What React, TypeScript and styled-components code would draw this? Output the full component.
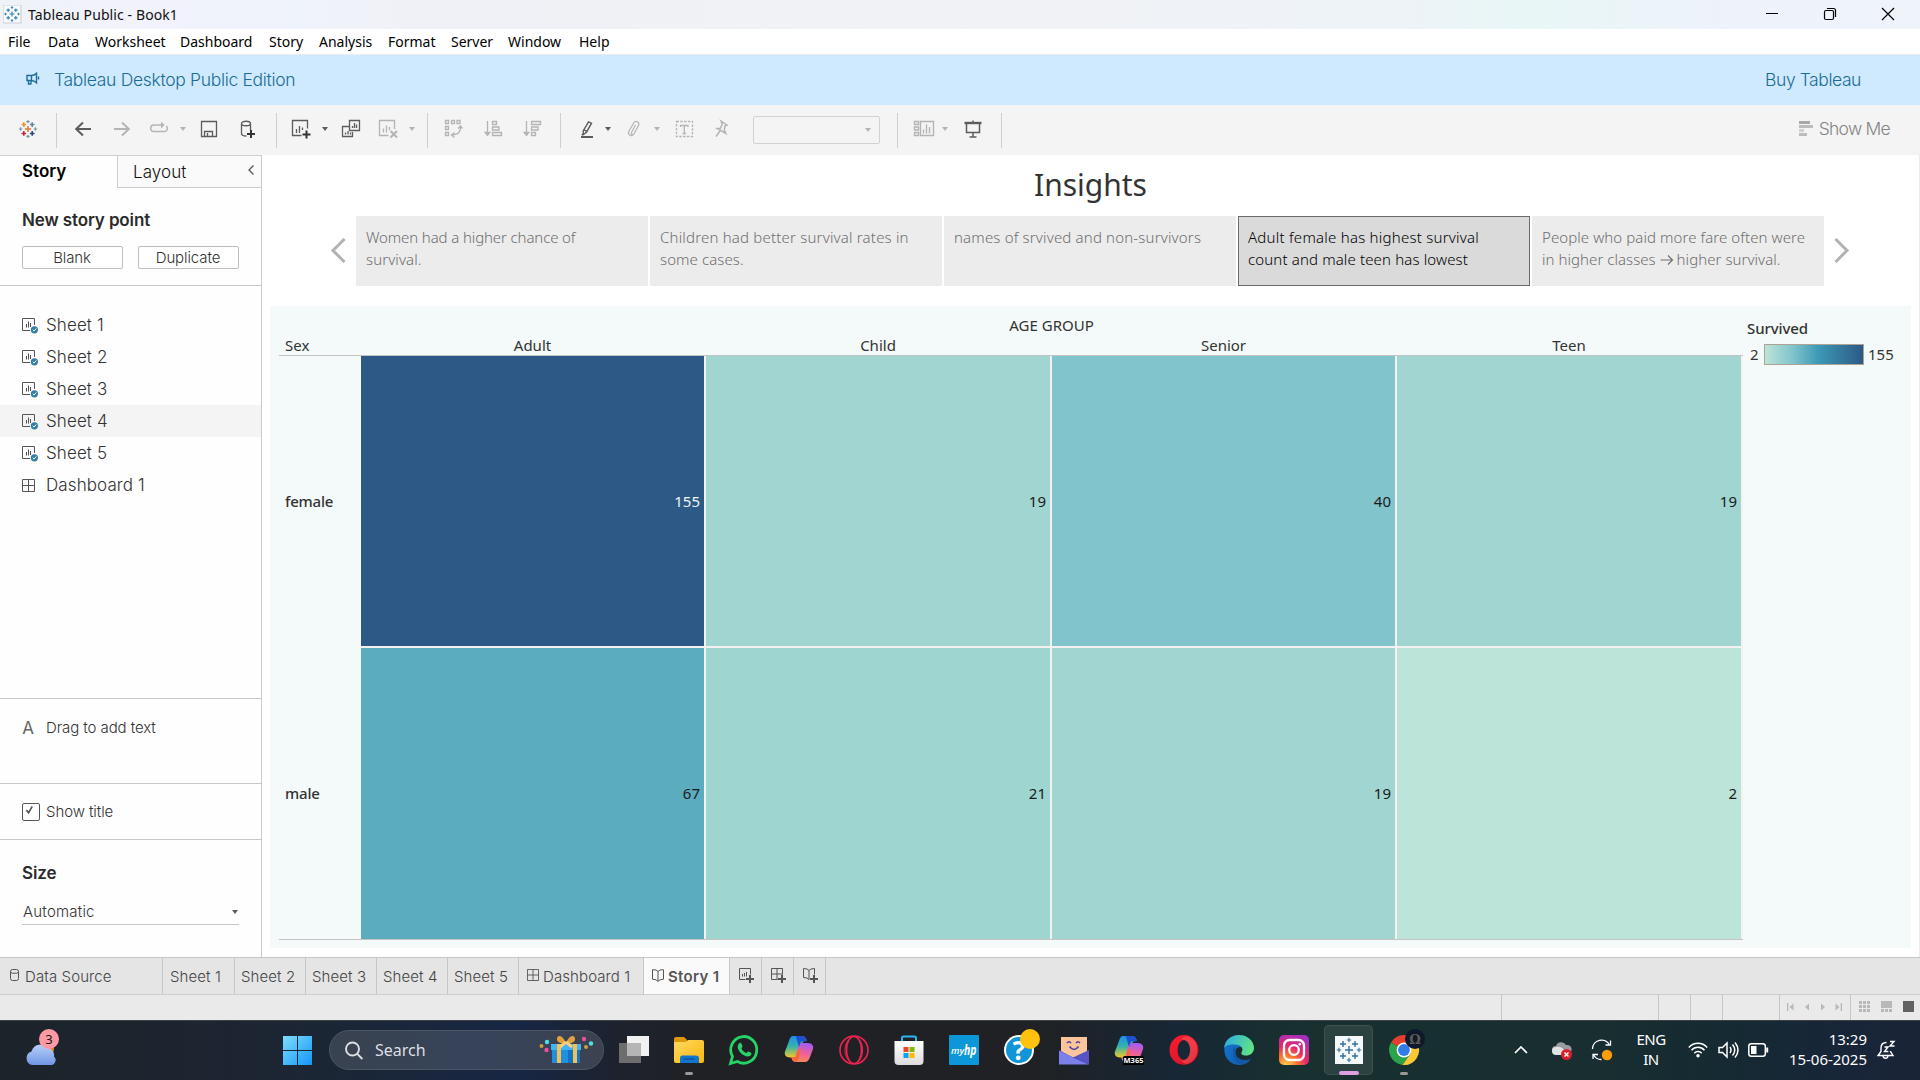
import React from "react";
import styled, { createGlobalStyle, css } from "styled-components";

const ui = `"Inter", "Liberation Sans", sans-serif`;
const book = `"Noto Sans", "Open Sans", sans-serif`;

const Global = createGlobalStyle`
  *, *::before, *::after { box-sizing: border-box; }
  html, body { margin: 0; padding: 0; background: #fff; overflow: hidden; }
  svg { display: block; flex: none; }
`;

const Screen = styled.div`
  width: 1920px;
  height: 1080px;
  display: flex;
  flex-direction: column;
  overflow: hidden;
  font-family: ${ui};
  color: #333;
  white-space: nowrap;
`;

/* ---------- window chrome ---------- */

const TitleBar = styled.header`
  height: 29px;
  display: flex;
  align-items: center;
  padding-left: 3px;
  background: linear-gradient(90deg, #eef3f8 0, #f2f2fb 120px, #eff3fb 300px, #f0f1f6 420px, #f1f2f6 1000px, #edf3f7 1400px, #e8f6f6 1530px, #eef2fb 1740px, #eff3fa 100%);
`;
const AppTitle = styled.span`
  flex: 1;
  padding: 0 0 0 6px;
  font: 400 14px/20px ${book};
  letter-spacing: 0.1px;
  color: #111;
`;
const WindowButtons = styled.div`
  display: flex;
  gap: 38px;
  padding: 0 22px 1px 0;
`;

const MenuBar = styled.nav`
  height: 26px;
  display: flex;
  align-items: center;
  gap: 16px;
  padding: 1px 8px 0;
  background: #fff;
  border-bottom: 1px solid #ececec;
  font: 400 14px/20px ${book};
  color: #000;
`;
const MenuItem = styled.span<{ $w: number }>`
  width: ${(p) => p.$w}px;
`;

const Banner = styled.div`
  height: 50px;
  display: flex;
  align-items: center;
  padding: 0 59px 2px 26px;
  background: #cfe9fe;
  color: #1a6d95;
  font-size: 17.5px;
  font-weight: 300;
`;
const BannerText = styled.span<{ $track: number }>`
  letter-spacing: ${(p) => p.$track}px;
`;
const BannerLabel = styled.div`
  flex: 1;
  display: flex;
  align-items: center;
  gap: 14px;
`;

/* ---------- toolbar ---------- */

const Toolbar = styled.div`
  height: 50px;
  display: flex;
  align-items: center;
  padding-bottom: 2px;
  background: #f4f4f4;
`;
const Tool = styled.span<{ $gap: number; $off?: boolean }>`
  margin-left: ${(p) => p.$gap}px;
  width: 20px;
  height: 20px;
  flex: none;
  color: ${(p) => (p.$off ? "#b4b4b4" : "#5c5c5c")};
`;
const Divider = styled.span<{ $gap: number }>`
  margin: 2px 0 0 ${(p) => p.$gap}px;
  width: 1px;
  height: 35px;
  flex: none;
  background: #cfcfcf;
`;
const Caret = styled.span<{ $gap?: number; $off?: boolean }>`
  margin-left: ${(p) => p.$gap ?? 0}px;
  width: 8px;
  display: flex;
  justify-content: center;
  flex: none;
  &::after {
    content: "";
    border: 3px solid transparent;
    border-top: 4px solid ${(p) => (p.$off ? "#b4b4b4" : "#5c5c5c")};
    border-bottom: 0;
  }
`;
const FitBox = styled.div`
  margin: 2px 0 0 22px;
  width: 127px;
  height: 28px;
  display: flex;
  align-items: center;
  justify-content: flex-end;
  padding-right: 7px;
  border: 1px solid #d2d2d2;
  border-radius: 2px;
`;
const ShowMe = styled.div`
  margin-left: auto;
  display: flex;
  align-items: center;
  gap: 6px;
  padding: 0 30px 1px 0;
  color: #858585;
  font-size: 17.5px;
  font-weight: 300;
  letter-spacing: -0.75px;
`;

/* ---------- side pane ---------- */

const Workspace = styled.div`
  height: 802px;
  display: flex;
`;
const Side = styled.aside`
  width: 262px;
  display: flex;
  flex-direction: column;
  border-right: 1px solid #cbcbcb;
  border-top: 1px solid #d0d0d0;
  background: #fefefe;
`;
const PaneTabs = styled.div`
  display: flex;
  height: 32px;
`;
const StoryTab = styled.div`
  width: 117px;
  padding: 2px 0 0 22px;
  font: 600 17px/26px ${ui};
  letter-spacing: 0;
  color: #000;
`;
const LayoutTab = styled.div`
  flex: 1;
  display: flex;
  justify-content: space-between;
  padding: 3px 7px 0 15px;
  border: solid #cbcbcb;
  border-width: 0 0 1px 1px;
  background: #fafafa;
  font: 300 17px/26px ${ui};
  letter-spacing: 0.1px;
  color: #111;
  svg { margin-top: 6px; }
`;
const Heading = styled.h2`
  margin: 0;
  font: 600 17px/24px ${ui};
  letter-spacing: -0.12px;
  color: #2b2b2b;
`;
const Section = styled.section<{ $h: number; $top: number; $flush?: boolean }>`
  height: ${(p) => p.$h}px;
  padding: ${(p) => p.$top}px ${(p) => (p.$flush ? 0 : 22)}px 0;
  border-bottom: 1px solid #c6c6c6;
  flex: none;
  &:last-child { border-bottom: 0; }
`;
const PointButtons = styled.div`
  display: flex;
  gap: 15px;
  margin-top: 14px;
`;
const PointButton = styled.button`
  width: 101px;
  height: 23px;
  padding: 0 1px 0 0;
  border: 1px solid #bdbdbd;
  border-radius: 2px;
  background: #fff;
  font: 300 15px/20px ${ui};
  letter-spacing: -0.1px;
  color: #333;
`;
const SheetRow = styled.div<{ $on?: boolean }>`
  height: 32px;
  display: flex;
  align-items: center;
  padding-left: 22px;
  font-size: 17px;
  font-weight: 300;
  letter-spacing: 0.1px;
  color: #333;
  background: ${(p) => (p.$on ? "#f4f4f4" : "transparent")};
`;
const RowIcon = styled.span`
  width: 24px;
`;
const Row = styled.div<{ $gap: number }>`
  display: flex;
  align-items: center;
  gap: ${(p) => p.$gap}px;
  font: 300 15px/20px ${ui};
  letter-spacing: -0.08px;
  color: #333;
`;
const Glyph = styled.span`
  width: 12px;
  font: 400 17px/20px ${ui};
  color: #666;
  text-align: center;
`;
const Check = styled.span`
  width: 18px;
  height: 18px;
  border: 1px solid #555;
  border-radius: 2px;
  display: grid;
  place-items: center;
  padding: 0 3px 3px 0;
  background: #fff;
`;
const SizeSelect = styled.div`
  display: flex;
  align-items: center;
  justify-content: space-between;
  width: 217px;
  height: 28px;
  margin-top: 12px;
  padding: 2px 0 0 1px;
  border-bottom: 1px solid #c6c6c6;
  font: 300 15px/20px ${ui};
  letter-spacing: 0.2px;
`;

/* ---------- story canvas ---------- */

const Canvas = styled.main`
  flex: 1;
  display: flex;
  flex-direction: column;
  background: #fff;
  border-right: 1px solid #ececec;
  font-family: ${book};
`;
const StoryTitle = styled.h1`
  margin: 0;
  height: 61px;
  padding-top: 11px;
  text-align: center;
  font: 400 30px/38px ${book};
  color: #333;
`;
const Navigator = styled.div`
  display: flex;
  align-items: center;
  height: 70px;
  padding-left: 68px;
`;
const Points = styled.div`
  display: flex;
  gap: 2px;
  margin: 0 10px;
`;
const Point = styled.div<{ $on?: boolean }>`
  width: 292px;
  height: 70px;
  padding: 9px 0 0 9px;
  border: 1px solid ${(p) => (p.$on ? "#6a6a6a" : "#ececec")};
  background: ${(p) => (p.$on ? "#dadada" : "#ececec")};
  color: ${(p) => (p.$on ? "#000" : "#6e6e6e")};
  font: 300 15px/22px ${book};
`;
const Line = styled.div<{ $track: number }>`
  height: 22px;
  letter-spacing: ${(p) => p.$track}px;
`;
const Arrow = styled.svg`
  display: inline-block;
  margin: 0 -1px 0 0;
  vertical-align: -1px;
`;
const Board = styled.div`
  margin: 20px 8px 0 8px;
  width: 1641px;
  height: 642px;
  display: flex;
  background: #f3faf9;
  font: 400 15px/20px ${book};
  color: #333;
`;
const Viz = styled.div`
  width: 1464px;
  margin-left: 9px;
  padding-top: 9px;
`;
const FieldTitle = styled.div`
  padding-left: 81px;
  text-align: center;
  height: 21px;
`;
const HeaderRow = styled.div`
  display: grid;
  grid-template-columns: 80px 343px 344px 343px 344px;
  column-gap: 2px;
  height: 20px;
  border-bottom: 1px solid #c4c4c4;
`;
const ColHead = styled.span<{ $left?: boolean }>`
  line-height: 19px;
  text-align: ${(p) => (p.$left ? "left" : "center")};
  padding-left: ${(p) => (p.$left ? 6 : 0)}px;
`;
const Body = styled.div`
  display: grid;
  grid-template-columns: 82px 1382px;
  height: 584px;
  border-bottom: 1px solid #c4c4c4;
`;
const RowHeads = styled.div`
  display: grid;
  grid-template-rows: 290px 290px;
  row-gap: 2px;
  align-items: center;
  padding-left: 6px;
  font-weight: 500;
  letter-spacing: -0.2px;
`;
const Cells = styled.div`
  display: grid;
  grid-template-columns: 343px 344px 343px 344px;
  grid-template-rows: 290px 291px;
  gap: 2px;
  background: #f4f1f0;
`;
const Cell = styled.div<{ $fill: string; $light?: boolean }>`
  display: flex;
  align-items: center;
  justify-content: flex-end;
  padding: 0 4px 1px 0;
  background: ${(p) => p.$fill};
  color: ${(p) => (p.$light ? "#f0f4f8" : "#1a1a1a")};
`;
const Legend = styled.div`
  padding: 12px 0 0 4px;
`;
const LegendTitle = styled.div`
  font-weight: 500;
  letter-spacing: -0.1px;
`;
const LegendScale = styled.div`
  display: flex;
  align-items: center;
  gap: 4px;
  padding: 6px 0 0 3px;
`;
const ScaleEnd = styled.span<{ $w: number }>`
  width: ${(p) => p.$w}px;
  margin-top: -2px;
`;
const Ramp = styled.span`
  width: 100px;
  height: 21px;
  border: 1px solid #aea393;
  background: linear-gradient(90deg, #bce4d8, #81c4cc 28%, #3c98b5 55%, #2c5985);
`;

/* ---------- sheet tabs and status bar ---------- */

const SheetTabs = styled.div`
  height: 38px;
  display: flex;
  border-top: 1px solid #c6c6c6;
  border-bottom: 1px solid #cecece;
  background: #e5e5e5;
`;
const SheetTab = styled.div<{ $w: number; $pad?: number; $gap?: number; $on?: boolean }>`
  width: ${(p) => p.$w}px;
  display: flex;
  align-items: center;
  gap: ${(p) => p.$gap ?? 5}px;
  padding-left: ${(p) => p.$pad ?? 6}px;
  border-right: 1px solid #c6c6c6;
  font-size: 15px;
  font-weight: 300;
  letter-spacing: 0.1px;
  color: #444;
  svg { margin-bottom: 2px; }
  ${(p) => p.$on && css`
    background: #fafafa;
    font-weight: 600;
    letter-spacing: 0.3px;
    color: #555;
  `}
`;
const StatusBar = styled.div`
  height: 25px;
  display: flex;
  justify-content: flex-end;
  background: #eaeaea;
`;
const StatusCell = styled.div<{ $w: number; $pad?: number; $gap?: number }>`
  width: ${(p) => p.$w}px;
  display: flex;
  align-items: center;
  gap: ${(p) => p.$gap ?? 0}px;
  padding: 0 0 2px ${(p) => p.$pad ?? 0}px;
  border-left: 1px solid #c6c6c6;
`;

/* ---------- taskbar ---------- */

const Taskbar = styled.footer`
  height: 60px;
  display: flex;
  align-items: center;
  border-top: 1px solid #3c4347;
  padding-bottom: 1px;
  color: #fff;
  background: linear-gradient(90deg, #1c242a 0, #1e2430 200px, #1b2635 330px, #172644 520px, #1d222d 620px, #202124 700px, #202124 1030px, #172735 1180px, #18302f 1290px, #182e30 1600px, #152a32 1720px, #182539 1850px, #1a2436 100%);
`;
const Weather = styled.div`
  position: relative;
  margin-left: 24px;
  width: 36px;
  height: 40px;
`;
const Badge = styled.span`
  position: absolute;
  left: 15px;
  top: -1px;
  width: 20px;
  height: 20px;
  border-radius: 50%;
  background: #ff99a4;
  color: #111;
  font: 400 13px/20px ${book};
  text-align: center;
`;
const Start = styled.div`
  margin-left: 223px;
`;
const SearchBox = styled.div`
  display: flex;
  align-items: center;
  margin-left: 17px;
  width: 275px;
  height: 40px;
  padding: 0 7px 0 15px;
  border-radius: 20px;
  border: 1px solid #4d5664;
  background: linear-gradient(90deg, #39424f, #36435a 55%, #3c4250);
  font: 400 16px/22px ${book};
  color: #dedfe2;
  span { flex: 1; padding-left: 12px; }
`;
const Apps = styled.div`
  display: flex;
  margin-left: 2px;
`;
const AppSlot = styled.div<{ $mark?: "dot" | "bar"; $active?: boolean }>`
  position: relative;
  width: 55px;
  height: 58px;
  display: grid;
  place-items: center;
  ${(p) => p.$active && css`
    &::before {
      content: "";
      position: absolute;
      inset: 4px 3px 4px 3px;
      border-radius: 5px;
      background: rgba(255, 255, 255, 0.09);
      border: 1px solid rgba(255, 255, 255, 0.08);
    }
  `}
  ${(p) => p.$mark && css`
    &::after {
      content: "";
      position: absolute;
      bottom: 4px;
      left: 50%;
      transform: translateX(-50%);
      width: ${p.$mark === "bar" ? 20 : 8}px;
      height: ${p.$mark === "bar" ? 4 : 3}px;
      border-radius: 2px;
      background: ${p.$mark === "bar" ? "#dc9fe0" : "#999"};
    }
  `}
  svg { position: relative; }
`;
const Tray = styled.div`
  margin-left: auto;
  display: flex;
  align-items: center;
  padding-right: 24px;
`;
const TrayItem = styled.span<{ $gap: number }>`
  margin-left: ${(p) => p.$gap}px;
`;
const TwoLines = styled.div<{ $gap: number; $right?: boolean; $w: number; $track: number }>`
  margin-left: ${(p) => p.$gap}px;
  padding-bottom: 2px;
  width: ${(p) => p.$w}px;
  text-align: ${(p) => (p.$right ? "right" : "center")};
  font: 400 15px/20px ${book};
  letter-spacing: ${(p) => p.$track}px;
`;

/* ---------- drawings ---------- */

const plus = (x: number, y: number, r: number) => `M${x - r} ${y}h${2 * r}M${x} ${y - r}v${2 * r}`;

function TableauMark({ size, colors }: { size: number; colors: string[] }) {
  const [c, ul, ur, dl, dr, small] = colors;
  return (
    <svg width={size} height={size} viewBox="0 0 20 20" fill="none" strokeWidth="1.5">
      <path d={plus(10, 10, 3)} stroke={c} />
      <path d={plus(5.8, 5.6, 2.3)} stroke={ul} />
      <path d={plus(14.2, 5.6, 2.3)} stroke={ur} />
      <path d={plus(5.8, 14.4, 2.3)} stroke={dl} />
      <path d={plus(14.2, 14.4, 2.3)} stroke={dr} />
      <path d={plus(10, 2.6, 1.7) + plus(10, 17.4, 1.7) + plus(2.6, 10, 1.7) + plus(17.4, 10, 1.7)} stroke={small} strokeWidth="1.1" />
    </svg>
  );
}

const toolDrawings: Record<string, React.ReactNode> = {
  back: <path d="M18 10H3.5M10 3.5 3.2 10l6.8 6.5" strokeWidth="2" />,
  forward: <path d="M2 10h14.5M10 3.5l6.8 6.5-6.800 6.5" strokeWidth="2" />,
  redo: (
    <>
      <path d="M13 6H5a3.300 3.300 0 0 0 0 6.600h10.500A3.200 3.200 0 0 0 17.300 7" strokeWidth="1.5" />
      <path d="M12 2.500 15.500 6 12 9.500z" fill="currentColor" stroke="none" />
    </>
  ),
  save: <path d="M2.500 2.500h15v15h-15zM5.500 17.500v-5h8v5M8.500 17v-3" />,
  source: (
    <>
      <path d="M3.500 4.500v10c0 1.500 2 2.500 5 2.500M12.500 4.500v7M3.500 4.500c0-3 9-3 9 0s-9 3-9 0z" />
      <path d="M13 11v8M9 15h8" strokeWidth="2" stroke="#333" />
    </>
  ),
  newSheet: (
    <>
      <path d="M17.500 9.500v-8h-15v15h9M6.500 14v-4M9.500 14V7M12.500 11V8.500" />
      <path d="M16.500 11.500v8M12.500 15.500h8" strokeWidth="2" stroke="#333" />
    </>
  ),
  duplicate: <path d="M8.500 1.500h10v10h-10zM8 7.500H1.500v10h10V13M4.500 15.500v-2M7 15.500v-3.500M9.500 15.500v-2M11.500 9V7M13.500 9V4M15.500 9V5.500" />,
  clear: (
    <>
      <path d="M16.500 10V1.500h-15v15h9M5.500 13.500V9.500M8.500 13.500v-7M11.500 11V8" />
      <path d="M12.500 12l6.500 6.500M19 12l-6.500 6.500" strokeWidth="2" />
    </>
  ),
  swap: <path d="M2.500 1.500h3v3h-3zM8.500 1.500h3v3h-3zM14 1.500h3v3h-3zM2.500 7.500h3v3h-3zM2.500 13.500h3v3h-3zM17.500 7.500c0 6-2 8-9 8.500M11.500 13.500 8.500 16l3 2.500M15 9.500 17.500 7l2 2.500" />,
  asc: <path d="M4.500 2v14M2.200 13.500l2.300 3 2.300-3zM9.500 2.500h4v3h-4zM9.500 8h6.500v3H9.500zM9.500 13.500h9v3h-9z" />,
  desc: <path d="M4.500 2v14M2.200 13.500l2.300 3 2.300-3zM9.500 2.500h9v3h-9zM9.500 8h6.500v3H9.500zM9.500 13.500h4v3h-4z" />,
  pen: (
    <>
      <path d="m11.500 2.800 3 1.400-5 9-3 2.300-.3-3.700zM7 10.800l2.700 1.500M4.800 16.200l1.600-1.600" strokeWidth="1.4" />
      <path d="M4 18h12" strokeWidth="2" />
    </>
  ),
  clip: <path d="m12.500 6-4 7.500c-.8 1.800 1.500 2.800 2.500 1.200l4.500-8.200c1.500-3.500-3-5.500-4.800-2.500L6 12c-2 4 3 6 5 3" strokeWidth="1.2" />,
  text: (
    <>
      <path d="M2.500 2.500h16v15h-16z" strokeDasharray="2.4 1.4" />
      <path d="M6.500 8V6.500H14V8M10.300 6.500v8M8.500 14.500H12" />
    </>
  ),
  pin: <path d="M10 2 16 6l-2 .8-.7 4.200 1.500 3.500-8.500-5 3-.2 2-4zM9 12l-4 5.500" strokeWidth="1.5" />,
  cards: <path d="M.5 2.500h4v3h-4zM.5 8h4v3h-4zM.5 13.500h4v3h-4zM6.500 2.500h13v14h-13zM9.500 14.500v-4M12.500 14.500V5.500M15.500 14.500V8" strokeWidth="1.4" />,
  present: (
    <>
      <path d="M2.500 4h17" strokeWidth="2.4" />
      <path d="M4.500 5v8.500h13V5M11 1.500V3M11 13.500v5M7.500 18h7" strokeWidth="1.5" />
    </>
  ),
};

function ToolIcon({ name, gap, off }: { name: string; gap: number; off?: boolean }) {
  return (
    <Tool $gap={gap} $off={off}>
      <svg width="20" height="20" viewBox="0 0 20 20" fill="none" stroke="currentColor" strokeWidth="1.3" overflow="visible">
        {toolDrawings[name]}
      </svg>
    </Tool>
  );
}

const SheetIcon = () => (
  <svg width="17" height="17" viewBox="0 0 17 17" fill="none" stroke="#555">
    <path d="M12.500 8V1.500H.5v12H8M4.500 10.500V7M6.500 10.500v-6M8.500 10V6" />
    <circle cx="12.400" cy="12.800" r="3.600" fill="#2f7fa6" stroke="none" />
    <path d="m10.700 12.800 1.300 1.300 2.200-2.600" stroke="#fff" />
  </svg>
);
const GridIcon = ({ size }: { size: number }) => (
  <svg width={size} height={size} viewBox="0 0 13 13" fill="none" stroke="#555">
    <path d="M.5.5h12v12H.5zM6.500.5v12M.5 6.500h12" />
  </svg>
);
const BookIcon = () => (
  <svg width="12" height="13" viewBox="0 0 12 13" fill="none" stroke="#555">
    <path d="M6 2.500 4 1 .5.700v9.500l3.500.6 2 1.700 2-1.700 3.500-.6V.700L8 1zM6 2.500v9.500" />
  </svg>
);
const NewTabIcon = ({ kind }: { kind: "sheet" | "dash" | "story" }) => (
  <svg width="17" height="17" viewBox="0 0 17 17" fill="none" stroke="#555">
    {kind === "sheet" && <path d="M12.500 7.500V1.500H1.500v11h6M4.500 9.500V7M6.500 9.500V6M8.500 9.500V5" />}
    {kind === "dash" && <path d="M12.500 7.500V1.500H1.500v11h6M7 1.500v11M1.500 7h11" />}
    {kind === "story" && <path d="M12.500 7.500V1.500L9 2 7 3.500 5 2 1.500 1.500v9L5 11l2 1.700M7 3.500v9" />}
    <path d="M12 8v8M8 12h8" strokeWidth="2" />
  </svg>
);

const CopilotShape = () => (
  <>
    <path d="M9 1h9c3 0 4 2 5 5l-4 .5-3 12-4 4H6c-4 0-6-3-5-6L5 6c.8-3 2-5 4-5z" fill="url(#cpA)" />
    <path d="M21 27h-9c-3 0-4-2-5-5h4l4-13 3-1h6c4 0 6 3 5 6l-3 8c-.8 3-3 5-5 5z" fill="url(#cpB)" />
    <path d="M12 1h6c3 0 4 2 5 5h-4c-2 0-2.500 1-3 3l-1 3-2-7c-.7-2-1.200-3-1-4z" fill="#2050d0" />
    <path d="M13 18l2-4h2l-2 9c-.7 2.500-1.500 4-3.500 4L7 22h4c1.500 0 1.500-2 2-4z" fill="#f4683c" />
  </>
);

const Gradients = () => (
  <svg width="0" height="0">
    <defs>
      <linearGradient id="cpA" x1="0" y1="0" x2="0" y2="1"><stop offset="0" stopColor="#1c8ff0" /><stop offset=".5" stopColor="#37b3a6" /><stop offset="1" stopColor="#f3c822" /></linearGradient>
      <linearGradient id="cpB" x1="0.5" y1="0" x2=".3" y2="1"><stop offset="0" stopColor="#a45cf0" /><stop offset=".5" stopColor="#ef5f9c" /><stop offset="1" stopColor="#fa8a55" /></linearGradient>
      <linearGradient id="win" x1="0" y1="0" x2="1" y2="1"><stop offset="0" stopColor="#7fdcff" /><stop offset="1" stopColor="#1397f5" /></linearGradient>
      <linearGradient id="cloud" x1="0" y1="0" x2="0" y2="1"><stop offset="0" stopColor="#b9d0f7" /><stop offset="1" stopColor="#6f96e6" /></linearGradient>
      <linearGradient id="fold" x1="0" y1="0" x2="1" y2="1"><stop offset="0" stopColor="#ffd964" /><stop offset="1" stopColor="#fbb70c" /></linearGradient>
      <linearGradient id="opera" x1="0" y1="0" x2="1" y2="1"><stop offset="0" stopColor="#ff1b2d" /><stop offset=".6" stopColor="#e0182c" /><stop offset="1" stopColor="#a70014" /></linearGradient>
      <linearGradient id="edgeTop" x1="0" y1="0" x2="1" y2=".3"><stop offset="0" stopColor="#2aa9e8" /><stop offset="1" stopColor="#5fe08a" /></linearGradient>
      <linearGradient id="edgeLow" x1="0" y1="0" x2="1" y2="1"><stop offset="0" stopColor="#1478d4" /><stop offset="1" stopColor="#0f5aa8" /></linearGradient>
      <radialGradient id="insta" cx=".25" cy="1.05" r="1.15"><stop offset="0" stopColor="#ffd95a" /><stop offset=".3" stopColor="#fd7c2d" /><stop offset=".6" stopColor="#e4276b" /><stop offset="1" stopColor="#a32fc4" /></radialGradient>
      <linearGradient id="store" x1="0" y1="0" x2="0" y2="1"><stop offset="0" stopColor="#fff" /><stop offset="1" stopColor="#dcdcdc" /></linearGradient>
    </defs>
  </svg>
);

const apps: { id: string; mark?: "dot" | "bar"; active?: boolean; art: React.ReactNode }[] = [
  { id: "taskview", art: <><path d="M0 8h22v20H0z" fill="#6d6d6d" /><path d="M8 1h22v20H8z" fill="#f1f1f1" /><path d="M8 8h14v13H8z" fill="#b5b5b5" /></> },
  {
    id: "files", mark: "dot",
    art: <><path d="M0 4q0-2 2-2h8l3 3v4H0z" fill="#dd9a06" /><path d="M0 7h12l2-2h14q2 0 2 2v19q0 2-2 2H2q-2 0-2-2z" fill="url(#fold)" /><path d="M6 28v-5q0-2.500 2.500-2.500h13Q25 20.500 25 23v5z" fill="#0f76cc" /><path d="M9.500 24h11" stroke="#0b4f93" strokeWidth="1.2" /></>,
  },
  { id: "whatsapp", art: <><path d="M1.500 28.500 3.500 21.500A13 13.300 0 1 1 8.500 26.500z" fill="none" stroke="#25d366" strokeWidth="2.8" /><path d="M10 8.500c1-1 2-.8 2.500.3l1 2.300c.3 1-1 1.500-1 2.300 1 2.200 2.500 3.600 4.800 4.600 1-.2 1.300-1.800 2.200-1.400l2.400 1.200c1.200.6.3 2.500-1 3.300-3 1.500-7-.8-9.400-3.300C9.300 15.300 7.400 11.500 10 8.500z" fill="#25d366" /></> },
  { id: "copilot", art: <CopilotShape /> },
  { id: "operagx", art: <g fill="none" stroke="#ee2350" strokeWidth="1.6"><ellipse cx="15" cy="15" rx="14" ry="14" /><ellipse cx="15" cy="15" rx="7.500" ry="13.500" /><path d="M18 2.500c7.500 4 7.500 21 0 25M12 3c-8 4-8 20 0 24" strokeWidth="1" /></g> },
  { id: "store", art: <><path d="M8 8V3q0-1.500 1.500-1.500h11Q22 1.500 22 3v5" fill="none" stroke="#2cb5ef" strokeWidth="2" /><path d="M.5 6h29v20q0 4-4 4h-21q-4 0-4-4z" fill="url(#store)" /><path d="M9.500 12h5v5h-5z" fill="#e8472a" /><path d="M15.500 12h5v5h-5z" fill="#7fba00" /><path d="M9.500 18h5v5h-5z" fill="#05a4ef" /><path d="M15.500 18h5v5h-5z" fill="#ffb901" /></> },
  { id: "myhp", art: <><rect width="30" height="30" rx="1" fill="#0c97d8" /><text x="2" y="18.500" fill="#fff" fontFamily="Open Sans, sans-serif" fontSize="9.500" fontWeight="600" fontStyle="italic">my</text><text x="15" y="19.500" fill="#fff" fontFamily="Open Sans, sans-serif" fontSize="14" fontWeight="700" fontStyle="italic" textLength="12.500" lengthAdjust="spacingAndGlyphs">hp</text></> },
  { id: "help", art: <><circle cx="15" cy="15" r="15" fill="#fff" /><circle cx="15" cy="15" r="13" fill="#1195d6" /><text x="15" y="24.500" textAnchor="middle" fill="#fff" fontFamily="Open Sans, sans-serif" fontSize="26" fontWeight="700">?</text><circle cx="26" cy="4" r="10" fill="#ffc20e" /></> },
  { id: "mail", art: <><path d="M2 2h26v20H2z" fill="#fbc49a" /><path d="M0 15l15 8-13 6H0z" fill="#5452c8" /><path d="M0 16l30 13.500H0z" fill="#7c80ea" /><path d="M30 15v14.500L14 22.500z" fill="#5553c6" /><path d="M8 8q2-2.500 4 0M17 8q2-2.500 4 0M10.500 11.500q4.500 6 9 0" fill="none" stroke="#4143a8" strokeWidth="1.5" /></> },
  { id: "m365", art: <><CopilotShape /><rect x="9" y="21" width="21" height="9" rx="1.5" fill="#000" /><text x="19.500" y="28.300" textAnchor="middle" fill="#fff" fontFamily="Open Sans, sans-serif" fontSize="7.500" fontWeight="700">M365</text></> },
  { id: "opera", art: <><path fillRule="evenodd" d="M15 0a14.500 15 0 1 1 0 30 14.500 15 0 1 1 0-30zm0 5a6.500 10 0 1 0 0 20 6.500 10 0 1 0 0-20z" fill="url(#opera)" /><path d="M18 1c14 4 14 24 0 28-3-.5-5-2-6-3.500 12 1 12-22 0-21C13.500 2.500 16 1.300 18 1z" fill="#ff5a5f" opacity=".55" /></> },
  { id: "edge", art: <><path d="M15 0a15 15 0 1 0 11 25.500C18 28 10.500 23 11.500 16c.5-3 3-4.500 5.500-4L22 8z" fill="url(#edgeLow)" /><path d="M0 13C1 5 7 0 15 0c9 0 15 6.500 15 13 0 5-4 7.500-8 7.500-3.500 0-5.500-1.500-4.500-3 3-4.500-1.500-8-6.500-8C6 9 2 10 0 13z" fill="url(#edgeTop)" /><path d="M11 11c-4 5-2 14 5 18.500 5 .5 9-2.500 11-5.500-8 2.500-16 0-15.500-8z" fill="#1457a6" /></> },
  { id: "insta", art: <><rect width="30" height="30" rx="5" fill="url(#insta)" /><rect x="5" y="5" width="20" height="20" rx="5.500" fill="none" stroke="#fff" strokeWidth="2.3" /><circle cx="15" cy="15" r="4.800" fill="none" stroke="#fff" strokeWidth="2.3" /><circle cx="20.800" cy="9.300" r="1.3" fill="#fff" /></> },
  {
    id: "tableau", mark: "bar", active: true,
    art: <><path d="M1 1h28v28H1z" fill="#f5f8fa" /><g fill="none" stroke="#35709c" strokeWidth="1.4"><path d={plus(15, 15, 4) + plus(9, 9, 3) + plus(21, 9, 3) + plus(9, 21, 3) + plus(21, 21, 3)} /><path d={plus(15, 5, 2.2) + plus(15, 25, 2.2) + plus(5, 15, 2.2) + plus(25, 15, 2.2)} strokeWidth="1.1" /></g></>,
  },
  {
    id: "chrome", mark: "dot",
    art: <><path d="M15 15 2 7.500A15 15 0 0 1 28 7.500z" fill="#e43e2f" /><path d="M15 15 2 7.500a15 15 0 0 0 11.500 22.400L21.500 18.700z" fill="#2da24c" /><path d="M15 7.500h13A15 15 0 0 1 13.500 30l8-11.300z" fill="#fcc934" /><circle cx="15" cy="15" r="7.400" fill="#fff" /><circle cx="15" cy="15" r="5.900" fill="#2f7bea" /><circle cx="26" cy="4" r="10" fill="#10182c" /><text x="26" y="8.500" textAnchor="middle" fill="#5d5a52" fontFamily="DejaVu Serif, serif" fontSize="13" fontWeight="700">Ω</text></>,
  },
];

const Gift = () => (
  <svg width="58" height="32" viewBox="0 0 58 32">
    <path d="M14 12h28v17H14z" fill="#1f8fe0" /><path d="M30 12h12v17H30z" fill="#1272c4" /><path d="M13 10h30v6H13z" fill="#3fb3f5" />
    <path d="M19 10h4v19h-4zM35 10h4v19h-4z" fill="#f3bf57" />
    <path d="M28 9C24 0 19 1 19 5c0 3 3 5 9 4zM28 9c4-9 9-8 9-4 0 3-3 5-9 4z" fill="#e0a03c" /><path d="M28 8l-6 5M28 8l6 5" stroke="#f7ce7a" strokeWidth="3" />
    <circle cx="3.500" cy="12" r="2" fill="#c9a13c" /><circle cx="9" cy="8" r="2.200" fill="#4fdfe6" /><circle cx="8.500" cy="16" r="2.200" fill="#ee4f9e" />
    <circle cx="46" cy="5" r="2.200" fill="#ee4f9e" /><circle cx="53" cy="9.500" r="2.200" fill="#4fdfe6" /><circle cx="48" cy="13" r="2" fill="#c9a13c" />
  </svg>
);

const RightArrow = () => (
  <Arrow width="14" height="12" viewBox="0 0 14 12" fill="none" stroke="currentColor" strokeWidth="1.1">
    <path d="M.5 6h12M8 1.500 12.500 6 8 10.500" />
  </Arrow>
);

/* ---------- data ---------- */

const menu: [string, number][] = [["File", 24], ["Data", 31], ["Worksheet", 69], ["Dashboard", 73], ["Story", 34], ["Analysis", 53], ["Format", 47], ["Server", 41], ["Window", 55], ["Help", 32]];

const points: { lines: [React.ReactNode, number][]; on?: boolean }[] = [
  { lines: [["Women had a higher chance of", -0.12], ["survival.", 0.1]] },
  { lines: [["Children had better survival rates in", 0.19], ["some cases.", 0.1]] },
  { lines: [["names of srvived and non-survivors", 0.17]] },
  { lines: [["Adult female has highest survival", 0.24], ["count and male teen has lowest", 0.14]], on: true },
  { lines: [["People who paid more fare often were", 0.08], [<>in higher classes <RightArrow /> higher survival.</>, 0.05]] },
];

const cells: [number, string, boolean?][] = [
  [155, "#2c5985", true], [19, "#a1d5d1"], [40, "#81c4cc"], [19, "#a1d5d1"],
  [67, "#5aacbe"], [21, "#9ed5d1"], [19, "#a1d5d1"], [2, "#bce4d8"],
];

export default function App() {
  return (
    <Screen>
      <Global />
      <Gradients />
      <TitleBar>
        <svg width="19" height="19" viewBox="0 0 19 19" fill="none" stroke="#3b86b5" strokeWidth="1.2">
          <path d="M0 0h18v18H0z" fill="#f7f9fb" stroke="#ccd0d4" />
          <path d={plus(9, 9, 2.5) + plus(5.2, 5.2, 1.8) + plus(12.8, 5.2, 1.8) + plus(5.2, 12.8, 1.8) + plus(12.8, 12.8, 1.8) + plus(9, 2.5, 1.2) + plus(9, 15.5, 1.2) + plus(2.5, 9, 1.2) + plus(15.5, 9, 1.2)} />
        </svg>
        <AppTitle>Tableau Public - Book1</AppTitle>
        <WindowButtons>
          <svg width="20" height="16" viewBox="0 0 20 16" stroke="#000"><path d="M4 7.500h12" /></svg>
          <svg width="20" height="16" viewBox="0 0 20 16" fill="none" stroke="#000" strokeWidth="1.2"><rect x="4.500" y="4.500" width="9" height="9" rx="1.5" /><path d="M7 2.500h6.500q2 0 2 2V11" /></svg>
          <svg width="20" height="16" viewBox="0 0 20 16" stroke="#000" strokeWidth="1.2"><path d="m4 2 12 12M16 2 4 14" /></svg>
        </WindowButtons>
      </TitleBar>

      <MenuBar>
        {menu.map(([label, w]) => <MenuItem key={label} $w={w}>{label}</MenuItem>)}
      </MenuBar>

      <Banner>
        <BannerLabel>
          <svg width="14" height="14" viewBox="0 0 14 14" fill="none" stroke="#1a6d95" strokeWidth="1.4">
            <path d="M1 3.500h4.500c2 0 3.500-.8 5-2.300v9.600c-1.500-1.500-3-2.300-5-2.300H1zM5.500 3.500v5M2.500 8.500V12h2.300l.5-3.500M12.500 4.500v3" />
          </svg>
          <BannerText $track={-0.32}>Tableau Desktop Public Edition</BannerText>
        </BannerLabel>
        <BannerText $track={-0.43}>Buy Tableau</BannerText>
      </Banner>

      <Toolbar>
        <Tool $gap={18}><TableauMark size={20} colors={["#e8762c", "#eb912c", "#59879b", "#c72037", "#1f457e", "#7199a6"]} /></Tool>
        <Divider $gap={18} />
        <ToolIcon name="back" gap={16} />
        <ToolIcon name="forward" gap={19} off />
        <ToolIcon name="redo" gap={17} off />
        <Caret $gap={10} $off />
        <ToolIcon name="save" gap={12} />
        <ToolIcon name="source" gap={19} />
        <Divider $gap={18} />
        <ToolIcon name="newSheet" gap={13} />
        <Caret $gap={11} />
        <ToolIcon name="duplicate" gap={12} />
        <ToolIcon name="clear" gap={17} off />
        <Caret $gap={10} $off />
        <Divider $gap={11} />
        <ToolIcon name="swap" gap={15} off />
        <ToolIcon name="asc" gap={20} off />
        <ToolIcon name="desc" gap={19} off />
        <Divider $gap={18} />
        <ToolIcon name="pen" gap={16} />
        <Caret $gap={7} />
        <ToolIcon name="clip" gap={11} off />
        <Caret $gap={10} $off />
        <ToolIcon name="text" gap={13} off />
        <ToolIcon name="pin" gap={17} off />
        <FitBox><Caret $off /></FitBox>
        <Divider $gap={17} />
        <ToolIcon name="cards" gap={16} off />
        <Caret $gap={7} $off />
        <ToolIcon name="present" gap={13} />
        <Divider $gap={19} />
        <ShowMe>
          <svg width="14" height="15" viewBox="0 0 14 15">
            <path d="M0 0h11v3H0z" fill="#a8a8a8" /><path d="M0 4h14v3H0z" fill="#bcbcbc" /><path d="M0 8h5v3H0z" fill="#d0d0d0" /><path d="M0 12h8v3H0z" fill="#bcbcbc" />
          </svg>
          Show Me
        </ShowMe>
      </Toolbar>

      <Workspace>
        <Side>
          <PaneTabs>
            <StoryTab>Story</StoryTab>
            <LayoutTab>
              Layout
              <svg width="6" height="10" viewBox="0 0 6 10" fill="none" stroke="#555" strokeWidth="1.3"><path d="M5.500.5 1 5l4.500 4.500" /></svg>
            </LayoutTab>
          </PaneTabs>
          <Section $h={98} $top={20}>
            <Heading>New story point</Heading>
            <PointButtons>
              <PointButton>Blank</PointButton>
              <PointButton>Duplicate</PointButton>
            </PointButtons>
          </Section>
          <Section $h={413} $top={23} $flush>
            {[1, 2, 3, 4, 5].map((n) => (
              <SheetRow key={n} $on={n === 4}><RowIcon><SheetIcon /></RowIcon>Sheet {n}</SheetRow>
            ))}
            <SheetRow><RowIcon><GridIcon size={13} /></RowIcon>Dashboard 1</SheetRow>
          </Section>
          <Section $h={85} $top={19}>
            <Row $gap={12}><Glyph>A</Glyph>Drag to add text</Row>
          </Section>
          <Section $h={56} $top={18}>
            <Row $gap={6}>
              <Check><svg width="9" height="9" viewBox="0 0 10 10" fill="none" stroke="#555" strokeWidth="1.8"><path d="m1.500 4.500 2.500 3L8 .5" /></svg></Check>
              Show title
            </Row>
          </Section>
          <Section $h={117} $top={21}>
            <Heading>Size</Heading>
            <SizeSelect>Automatic<Caret /></SizeSelect>
          </Section>
        </Side>

        <Canvas>
          <StoryTitle>Insights</StoryTitle>
          <Navigator>
            <svg width="16" height="26" viewBox="0 0 16 26" fill="none" stroke="#b2b2b2" strokeWidth="3"><path d="M14.500 1 3 12.500 14.500 24" /></svg>
            <Points>
              {points.map((p, i) => (
                <Point key={i} $on={p.on}>
                  {p.lines.map(([text, track], j) => <Line key={j} $track={track}>{text}</Line>)}
                </Point>
              ))}
            </Points>
            <svg width="16" height="26" viewBox="0 0 16 26" fill="none" stroke="#b2b2b2" strokeWidth="3"><path d="M1.500 1 13 12.500 1.500 24" /></svg>
          </Navigator>
          <Board>
            <Viz>
              <FieldTitle>AGE GROUP</FieldTitle>
              <HeaderRow>
                <ColHead $left>Sex</ColHead>
                {["Adult", "Child", "Senior", "Teen"].map((h) => <ColHead key={h}>{h}</ColHead>)}
              </HeaderRow>
              <Body>
                <RowHeads><span>female</span><span>male</span></RowHeads>
                <Cells>
                  {cells.map(([value, fill, light], i) => <Cell key={i} $fill={fill} $light={light}>{value}</Cell>)}
                </Cells>
              </Body>
            </Viz>
            <Legend>
              <LegendTitle>Survived</LegendTitle>
              <LegendScale><ScaleEnd $w={10}>2</ScaleEnd><Ramp /><ScaleEnd $w={27}>155</ScaleEnd></LegendScale>
            </Legend>
          </Board>
        </Canvas>
      </Workspace>

      <SheetTabs>
        <SheetTab $w={163} $pad={10} $gap={6}>
          <svg width="9" height="12" viewBox="0 0 9 12" fill="none" stroke="#555"><path d="M.5 2.500v7q0 2 2 2h4q2 0 2-2v-7q0-2-2-2h-4q-2 0-2 2q0 1.700 2 1.700h4q2 0 2-1.700" /></svg>
          Data Source
        </SheetTab>
        {[72, 71, 71, 71, 71].map((w, i) => <SheetTab key={i} $w={w} $pad={i === 0 ? 7 : 6}>Sheet {i + 1}</SheetTab>)}
        <SheetTab $w={125} $pad={8} $gap={4}><GridIcon size={12} />Dashboard 1</SheetTab>
        <SheetTab $w={86} $pad={8} $gap={4} $on><BookIcon />Story 1</SheetTab>
        <SheetTab $w={32} $pad={8}><NewTabIcon kind="sheet" /></SheetTab>
        <SheetTab $w={32} $pad={8}><NewTabIcon kind="dash" /></SheetTab>
        <SheetTab $w={32} $pad={8}><NewTabIcon kind="story" /></SheetTab>
      </SheetTabs>

      <StatusBar>
        <StatusCell $w={157} />
        <StatusCell $w={32} />
        <StatusCell $w={32} />
        <StatusCell $w={57} />
        <StatusCell $w={71} $pad={7} $gap={8}>
          <svg width="8" height="8" viewBox="0 0 8 8" fill="#b8b8b8"><path d="M0 0h1.300v8H0zM6.500.5v7L2.500 4z" /></svg>
          <svg width="8" height="8" viewBox="0 0 8 8" fill="#b8b8b8"><path d="M6 .5v7L2 4z" /></svg>
          <svg width="8" height="8" viewBox="0 0 8 8" fill="#b8b8b8"><path d="M2 .5v7L6 4z" /></svg>
          <svg width="8" height="8" viewBox="0 0 8 8" fill="#b8b8b8"><path d="M5.700 0H7v8H5.700zM.5.5v7l4-3.500z" /></svg>
        </StatusCell>
        <StatusCell $w={70} $pad={8} $gap={11}>
          <svg width="11" height="11" viewBox="0 0 11 11" fill="#b8b8b8"><path d="M0 0h3v3H0zM4 0h3v3H4zM8 0h3v3H8zM0 4h3v3H0zM4 4h3v3H4zM8 4h3v3H8zM0 8h3v3H0zM4 8h3v3H4zM8 8h3v3H8z" /></svg>
          <svg width="11" height="11" viewBox="0 0 11 11" fill="#b8b8b8"><path d="M0 0h11v7H0zM0 8h3v3H0zM4 8h3v3H4zM8 8h3v3H8z" /></svg>
          <svg width="11" height="11" viewBox="0 0 11 11" fill="#626262"><path d="M0 0h11v11H0z" /></svg>
        </StatusCell>
      </StatusBar>

      <Taskbar>
        <Weather>
          <svg width="36" height="40" viewBox="0 0 36 40">
            <circle cx="23" cy="19" r="7" fill="#f5821f" />
            <path d="M8 35a7 7 0 0 1-.5-13.500A9.500 9.500 0 0 1 24 18a7.500 7.500 0 0 1 6 8.500 5 5 0 0 1-2 8.500z" fill="url(#cloud)" />
          </svg>
          <Badge>3</Badge>
        </Weather>
        <Start>
          <svg width="29" height="29" viewBox="0 0 29 29" fill="url(#win)"><path d="M0 0h14v14H0zM15 0h14v14H15zM0 15h14v14H0zM15 15h14v14H15z" /></svg>
        </Start>
        <SearchBox>
          <svg width="18" height="19" viewBox="0 0 18 19" fill="none" stroke="#dcdee1" strokeWidth="1.9"><circle cx="7.500" cy="8" r="6.500" /><path d="m12.300 12.800 5 5.200" /></svg>
          <span>Search</span>
          <Gift />
        </SearchBox>
        <Apps>
          {apps.map((a) => (
            <AppSlot key={a.id} $mark={a.mark} $active={a.active}>
              <svg width="30" height="30" viewBox="0 0 30 30" overflow="visible">{a.art}</svg>
            </AppSlot>
          ))}
        </Apps>
        <Tray>
          <TrayItem $gap={0}><svg width="14" height="8" viewBox="0 0 14 8" fill="none" stroke="#fff" strokeWidth="1.7"><path d="m1 7 6-6 6 6" /></svg></TrayItem>
          <TrayItem $gap={23}>
            <svg width="22" height="20" viewBox="0 0 22 20">
              <path d="M5 14a4 4 0 0 1 0-8 5.500 5.500 0 0 1 10-1 4.500 4.500 0 0 1 2 9z" fill="#9a9d9f" /><path d="M5 15a4 4 0 0 1 0-8q5-1 8 3l3 5z" fill="#e0e2e3" />
              <circle cx="15.500" cy="14.500" r="5.500" fill="#d8202c" /><path d="m13.500 12.500 4 4M17.500 12.500l-4 4" stroke="#fff" strokeWidth="1.4" />
            </svg>
          </TrayItem>
          <TrayItem $gap={18}>
            <svg width="22" height="22" viewBox="0 0 22 22" fill="none" stroke="#fff" strokeWidth="1.3">
              <path d="M1.500 10A9 9 0 0 1 18.500 6M19.500 1.500V6H14.500M2 20v-4.500h5M2.500 16a9 9 0 0 0 8 4.500" />
              <circle cx="16" cy="16" r="5.200" fill="#ff9a0b" stroke="none" />
            </svg>
          </TrayItem>
          <TwoLines $gap={22} $w={32} $track={-0.5}>ENG<br />IN</TwoLines>
          <TrayItem $gap={21}>
            <svg width="20" height="16" viewBox="0 0 20 16" fill="none" stroke="#fff" strokeWidth="1.5">
              <path d="M.8 5.500c5-5.600 13.400-5.600 18.400 0M3.500 8.300c3.500-4 9.500-4 13 0M6.300 11.200c2-2.300 5.400-2.300 7.400 0" /><circle cx="10" cy="13.700" r="1.7" fill="#fff" stroke="none" />
            </svg>
          </TrayItem>
          <TrayItem $gap={10}>
            <svg width="21" height="18" viewBox="0 0 21 18" fill="none" stroke="#fff" strokeWidth="1.5">
              <path d="M1 6.500h3.500L9 2v14l-4.500-4.500H1zM12 6q2 3 0 6M14.500 3.500q4.500 5.500 0 11M17 1.500q6 7.500 0 15" />
            </svg>
          </TrayItem>
          <TrayItem $gap={9}>
            <svg width="21" height="14" viewBox="0 0 21 14" fill="none" stroke="#fff" strokeWidth="1.5">
              <rect x=".8" y=".8" width="16.500" height="12.400" rx="2.5" /><path d="M3 3h5.500v8H3z" fill="#fff" stroke="none" /><path d="M19.200 4.500v5" strokeWidth="2" />
            </svg>
          </TrayItem>
          <TwoLines $gap={17} $w={81} $right $track={-0.02}>13:29<br />15-06-2025</TwoLines>
          <TrayItem $gap={10}>
            <svg width="19" height="20" viewBox="0 0 19 20" fill="none" stroke="#fff" strokeWidth="1.4">
              <path d="M9.500 2.500C5.500 2.500 4 5 4 8v3.500L1 15.500h15l-2.500-4V11M6 16c.5 3 4.500 3 5 0M7.500 7H11l-3.500 4.500h3.800M13 1.500h4L13 6h4.500" />
            </svg>
          </TrayItem>
        </Tray>
      </Taskbar>
    </Screen>
  );
}
